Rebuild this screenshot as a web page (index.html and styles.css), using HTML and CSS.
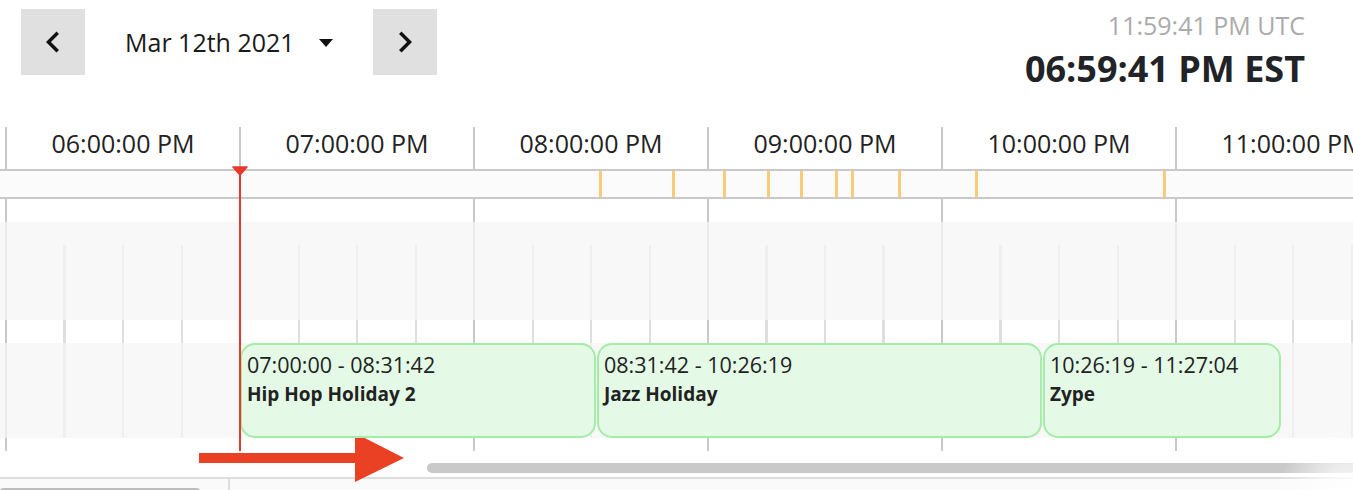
FILE: index.html
```html
<!DOCTYPE html>
<html lang="en">
<head>
<meta charset="utf-8">
<title>Schedule timeline</title>
<link rel="stylesheet" href="styles.css">
</head>
<body>
<div class="app">
  <header class="topbar">
    <div class="nav">
      <button class="navbtn" aria-label="Previous day">
        <svg viewBox="0 0 24 24" width="42" height="42"><path d="M15.41 7.41L14 6l-6 6 6 6 1.41-1.41L10.83 12z" fill="#111"/></svg>
      </button>
      <div class="date">
        <span class="date-text">Mar 12th 2021</span>
        <span class="caret"></span>
      </div>
      <button class="navbtn" aria-label="Next day">
        <svg viewBox="0 0 24 24" width="42" height="42"><path d="M8.59 16.59L10 18l6-6-6-6-1.41 1.41L13.17 12z" fill="#111"/></svg>
      </button>
    </div>
    <div class="clock">
      <div class="utc">11:59:41 PM UTC</div>
      <div class="local">06:59:41 PM EST</div>
    </div>
  </header>

  <section class="timeline">
    <div class="track">
      <div class="hours">
        <div class="hour"></div>
        <div class="hour">06:00:00 PM</div>
        <div class="hour">07:00:00 PM</div>
        <div class="hour">08:00:00 PM</div>
        <div class="hour">09:00:00 PM</div>
        <div class="hour">10:00:00 PM</div>
        <div class="hour">11:00:00 PM</div>
      </div>
      <div class="ticks">
        <span class="tick" style="left:827.5px"></span>
        <span class="tick" style="left:901px"></span>
        <span class="tick" style="left:952px"></span>
        <span class="tick" style="left:995.5px"></span>
        <span class="tick" style="left:1029px"></span>
        <span class="tick" style="left:1063.5px"></span>
        <span class="tick" style="left:1079.5px"></span>
        <span class="tick" style="left:1126.5px"></span>
        <span class="tick" style="left:1204px"></span>
        <span class="tick" style="left:1392px"></span>
      </div>
      <div class="grid">
        <div class="row spacer"></div>
        <div class="row band band-first"></div>
        <div class="row gap"></div>
        <div class="row band band-events">
          <div class="event" style="left:469px;width:356px">
            <div class="ev-time">07:00:00 - 08:31:42</div>
            <div class="ev-title">Hip Hop Holiday 2</div>
          </div>
          <div class="event" style="left:826px;width:445px">
            <div class="ev-time">08:31:42 - 10:26:19</div>
            <div class="ev-title">Jazz Holiday</div>
          </div>
          <div class="event" style="left:1272px;width:238px">
            <div class="ev-time">10:26:19 - 11:27:04</div>
            <div class="ev-title">Zype</div>
          </div>
        </div>
        <div class="row tail"></div>
      </div>
      <div class="now">
        <svg class="now-head" viewBox="0 0 16 10" width="16" height="10"><path d="M1 1 L15 1 L8 9 Z" fill="#e8392a" stroke="#e8392a" stroke-width="1.5" stroke-linejoin="round"/></svg>
      </div>
    </div>
    <div class="scroll">
      <div class="thumb"></div>
    </div>
  </section>

  <footer class="bottom">
    <div class="bottom-left"><div class="bottom-bar"></div></div>
    <div class="bottom-right"></div>
  </footer>

  <svg class="annot-arrow" viewBox="0 0 206 50" width="206" height="50" aria-hidden="true">
    <rect x="0" y="20" width="157" height="10" fill="#ea4125"/>
    <polygon points="156,0 205,25 156,49" fill="#ea4125"/>
  </svg>
  <div class="corner-glow"></div>
</div>
</body>
</html>
```
FILE: styles.css
```css
* { box-sizing: border-box; }
html, body { margin: 0; padding: 0; }
body {
  width: 1353px;
  height: 490px;
  overflow: hidden;
  background: #fff;
  font-family: "Open Sans", "Noto Sans", sans-serif;
  color: #212529;
}
.app {
  position: relative;
  width: 1353px;
  height: 490px;
  overflow: hidden;
}

/* ---------- top bar ---------- */
.topbar {
  display: flex;
  justify-content: space-between;
  align-items: flex-start;
  height: 127px;
}
.nav {
  display: flex;
  align-items: center;
  padding: 9px 0 0 21px;
}
.navbtn {
  width: 64px;
  height: 66px;
  border: 0;
  padding: 0;
  margin: 0;
  background: #e0e0e0;
  display: flex;
  align-items: center;
  justify-content: center;
}
.navbtn svg { display: block; }
.date {
  display: flex;
  align-items: center;
  gap: 24px;
  margin: 0 40px 0 40px;
  height: 66px;
}
.date-text {
  font-size: 25px;
  line-height: 66px;
  color: #1a1a1a;
}
.caret {
  width: 0;
  height: 0;
  border-left: 7px solid transparent;
  border-right: 7px solid transparent;
  border-top: 8px solid #111;
  margin-top: 2px;
}
.clock {
  padding: 9px 48px 0 0;
  text-align: right;
}
.utc {
  font-size: 25px;
  line-height: 32px;
  color: #ababab;
}
.local {
  margin-top: 8px;
  font-size: 36px;
  line-height: 40px;
  font-weight: 700;
  color: #212326;
}

/* ---------- timeline ---------- */
.timeline {
  overflow: hidden;
}
.track {
  position: relative;
  width: 1638px;
  margin-left: -229px;
}
.hours {
  display: flex;
  height: 42px;
}
.hour {
  flex: 0 0 234px;
  border-left: 2px solid #c9c9c9;
  text-align: center;
  font-size: 25px;
  line-height: 28px;
  padding-top: 2px;
  color: #222;
  white-space: nowrap;
}
.ticks {
  position: relative;
  height: 30px;
  border-top: 2px solid #c9c9c9;
  border-bottom: 2px solid #c9c9c9;
  background: #fbfbfb;
}
.tick {
  position: absolute;
  top: 0;
  bottom: 0;
  width: 3px;
  background: #fccb78;
}
.row { position: relative; }
.spacer {
  height: 23px;
  background: repeating-linear-gradient(90deg, #c9c9c9 0 2px, transparent 2px 234px);
}
.band-first {
  height: 98px;
  background:
    repeating-linear-gradient(90deg, #ebebeb 0 2px, transparent 2px 234px),
    repeating-linear-gradient(90deg, #efefef 0 2px, transparent 2px 58.5px) 0 23px / 100% 75px no-repeat,
    #f8f8f8;
}
.gap {
  height: 23px;
  background:
    repeating-linear-gradient(90deg, #c9c9c9 0 2px, transparent 2px 234px),
    repeating-linear-gradient(90deg, #dedede 0 2px, transparent 2px 58.5px),
    #fff;
}
.band-events {
  height: 95px;
  background:
    repeating-linear-gradient(90deg, #ebebeb 0 2px, transparent 2px 234px),
    repeating-linear-gradient(90deg, #efefef 0 2px, transparent 2px 58.5px),
    #f8f8f8;
}
.tail {
  height: 13px;
  background: repeating-linear-gradient(90deg, #c9c9c9 0 2px, transparent 2px 234px);
}
.event {
  position: absolute;
  top: 0;
  height: 95px;
  border: 2px solid #a4eca7;
  border-radius: 15px;
  background: #e4fae6;
  padding: 7px 5px 0 5px;
  z-index: 1;
  overflow: hidden;
  white-space: nowrap;
}
.ev-time {
  font-size: 21.5px;
  line-height: 26px;
  color: #222;
}
.ev-title {
  margin-top: 3px;
  font-size: 19px;
  line-height: 26px;
  font-weight: 700;
  color: #222;
}
.now {
  position: absolute;
  left: 468px;
  top: 43px;
  width: 2px;
  height: 281px;
  background: #e8392a;
  z-index: 2;
}
.now-head {
  position: absolute;
  left: -7px;
  top: -4px;
  display: block;
}

/* ---------- scrollbar ---------- */
.scroll {
  height: 28px;
  padding-top: 12px;
  border-bottom: 2px solid #dddddd;
}
.thumb {
  margin-left: 427px;
  width: 1000px;
  height: 10px;
  border-radius: 5px;
  background: #c9c9c9;
}

/* ---------- bottom ---------- */
.bottom {
  display: flex;
  height: 11px;
  background: #fafafa;
}
.bottom-left {
  width: 230px;
  border-right: 2px solid #dddddd;
  padding-top: 9px;
}
.bottom-bar {
  width: 200px;
  height: 6px;
  border-radius: 3px;
  background: #bdbdbd;
}
.bottom-right { flex: 1; }

/* ---------- annotation overlay ---------- */
.annot-arrow {
  position: absolute;
  left: 199px;
  top: 433px;
  display: block;
}
.corner-glow {
  position: absolute;
  right: 0;
  bottom: 0;
  width: 70px;
  height: 60px;
  background: radial-gradient(ellipse at 100% 100%, rgba(255,255,255,0.95) 0, rgba(255,255,255,0.6) 35%, rgba(255,255,255,0) 75%);
  pointer-events: none;
}
```
